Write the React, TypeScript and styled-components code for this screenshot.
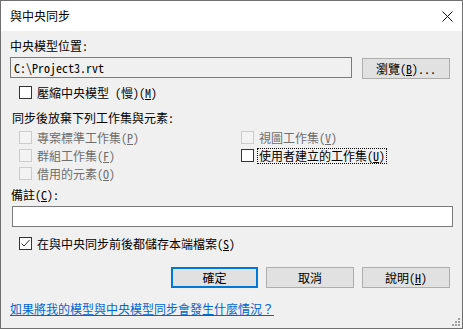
import React from "react";
import styled, { createGlobalStyle, css } from "styled-components";

const Global = createGlobalStyle`
  html, body { margin: 0; padding: 0; background: #ffffff; }
  * { box-sizing: border-box; }
  body {
    font-family: "Noto Sans Mono CJK TC", "Noto Sans CJK TC", sans-serif;
    font-size: 12px;
    color: #000000;
  }
`;

const Window = styled.div`
  position: relative;
  width: 463px;
  height: 329px;
  border: 1px solid #707070;
  background: #f0f0f0;
  display: flex;
  flex-direction: column;
  overflow: hidden;
`;

const TitleBar = styled.div`
  height: 30px;
  background: #ffffff;
  display: flex;
  align-items: center;
  justify-content: space-between;
  padding: 0 9px 0 9px;
  flex-shrink: 0;
`;

const Title = styled.div`
  font-size: 12px;
  line-height: 14px;
  color: #000;
`;

const CloseBtn = styled.div`
  width: 11px;
  height: 11px;
  margin-right: 0px;
  margin-top: 1px;
  display: flex;
`;

const Body = styled.div`
  flex: 1;
  display: flex;
  flex-direction: column;
  padding: 0 9px;
`;

const Label = styled.div<{ $top: number; $indent?: number }>`
  margin-top: ${(p) => p.$top}px;
  padding-left: ${(p) => p.$indent ?? 0}px;
  height: 14px;
  line-height: 14px;
  white-space: nowrap;
`;

const PathRow = styled.div`
  margin-top: 4px;
  display: flex;
  align-items: flex-start;
  gap: 10px;
`;

const TextField = styled.div<{ $readonly?: boolean; $indent?: number }>`
  height: 21px;
  border: 1px solid #7a7a7a;
  background: ${(p) => (p.$readonly ? "#f0f0f0" : "#ffffff")};
  padding: 0 3px;
  line-height: 19px;
  white-space: nowrap;
  margin-left: ${(p) => p.$indent ?? 0}px;
`;

const PathField = styled(TextField)`
  width: 342px;
`;

const Button = styled.div<{ $default?: boolean; $top?: number }>`
  width: 88px;
  height: 21px;
  margin-top: ${(p) => p.$top ?? 0}px;
  background: #e1e1e1;
  border: 1px solid #adadad;
  display: flex;
  align-items: center;
  justify-content: center;
  white-space: nowrap;
  ${(p) =>
    p.$default &&
    css`
      width: 87px;
      border: 2px solid #0078d7;
    `}
`;

const CheckRow = styled.div<{ $top?: number; $disabled?: boolean }>`
  margin-top: ${(p) => p.$top ?? 0}px;
  height: 13px;
  display: flex;
  align-items: center;
  gap: 3px;
  white-space: nowrap;
  color: ${(p) => (p.$disabled ? "#6d6d6d" : "#000")};
`;

const Box = styled.div<{ $disabled?: boolean }>`
  width: 13px;
  height: 13px;
  flex-shrink: 0;
  border: 1px solid ${(p) => (p.$disabled ? "#cccccc" : "#333333")};
  background: ${(p) => (p.$disabled ? "#f3f3f3" : "#ffffff")};
  display: flex;
  align-items: center;
  justify-content: center;
`;

const CheckText = styled.span<{ $focus?: boolean }>`
  line-height: 14px;
  padding: 0 1px;
  border: 1px solid transparent;
  ${(p) =>
    p.$focus &&
    css`
      border: 1px dotted #000;
    `}
`;

const Grid = styled.div`
  margin-top: 6px;
  padding-left: 9px;
  display: grid;
  grid-template-columns: 222px 1fr;
  row-gap: 5px;
`;

const Mn = styled.span`
  text-decoration: underline;
`;

const ButtonBar = styled.div`
  margin-top: 17px;
  display: flex;
  justify-content: flex-end;
  gap: 8px;
  padding-right: 3px;
`;

const Link = styled.a`
  margin-top: 14px;
  color: #0066cc;
  text-decoration: underline;
  line-height: 14px;
  white-space: nowrap;
  cursor: pointer;
`;

const Grip = styled.div`
  position: absolute;
  right: 2px;
  bottom: 2px;
  width: 8px;
  height: 8px;
  display: grid;
  grid-template-columns: repeat(3, 2px);
  grid-template-rows: repeat(3, 2px);
  gap: 1px;
`;

const Dot = styled.span<{ $on: boolean }>`
  background: ${(p) => (p.$on ? "#a0a0a0" : "transparent")};
`;

const Check = ({
  label,
  m,
  checked,
  disabled,
  focus,
  top,
}: {
  label: string;
  m: string;
  checked?: boolean;
  disabled?: boolean;
  focus?: boolean;
  top?: number;
}) => (
  <CheckRow $top={top} $disabled={disabled}>
    <Box $disabled={disabled}>
      {checked && (
        <svg width="11" height="11" viewBox="0 0 11 11">
          <path d="M1.5 5.5 L4 8 L9.5 2" fill="none" stroke="#333" strokeWidth="1" />
        </svg>
      )}
    </Box>
    <CheckText $focus={focus}>
      {label}(<Mn>{m}</Mn>)
    </CheckText>
  </CheckRow>
);

export default function App() {
  const grip = [0, 0, 1, 0, 1, 1, 1, 1, 1];
  return (
    <>
      <Global />
      <Window>
        <TitleBar>
          <Title>與中央同步</Title>
          <CloseBtn>
            <svg width="11" height="11" viewBox="0 0 11 11">
              <path d="M0.5 0.5 L10.5 10.5 M10.5 0.5 L0.5 10.5" stroke="#111" strokeWidth="1" />
            </svg>
          </CloseBtn>
        </TitleBar>
        <Body>
          <Label $top={8}>中央模型位置:</Label>
          <PathRow>
            <PathField $readonly>C:\Project3.rvt</PathField>
            <Button $top={1}>
              瀏覽(<Mn>B</Mn>)...
            </Button>
          </PathRow>
          <div style={{ paddingLeft: 9 }}>
            <Check top={7} label="壓縮中央模型 (慢)" m="M" />
          </div>
          <Label $top={12} $indent={2}>
            同步後放棄下列工作集與元素:
          </Label>
          <Grid>
            <Check disabled label="專案標準工作集" m="P" />
            <Check disabled label="視圖工作集" m="V" />
            <Check disabled label="群組工作集" m="F" />
            <Check focus label="使用者建立的工作集" m="U" />
            <Check disabled label="借用的元素" m="O" />
          </Grid>
          <Label $top={8} $indent={1}>
            備註(<Mn>C</Mn>):
          </Label>
          <TextField $indent={2} style={{ marginTop: 4 }} />
          <div style={{ paddingLeft: 9 }}>
            <Check top={10} checked label="在與中央同步前後都儲存本端檔案" m="S" />
          </div>
          <ButtonBar>
            <Button $default>確定</Button>
            <Button>取消</Button>
            <Button>
              說明(<Mn>H</Mn>)
            </Button>
          </ButtonBar>
          <Link>如果將我的模型與中央模型同步會發生什麼情況？</Link>
        </Body>
        <Grip>
          {grip.map((g, i) => (
            <Dot key={i} $on={g === 1} />
          ))}
        </Grip>
      </Window>
    </>
  );
}
